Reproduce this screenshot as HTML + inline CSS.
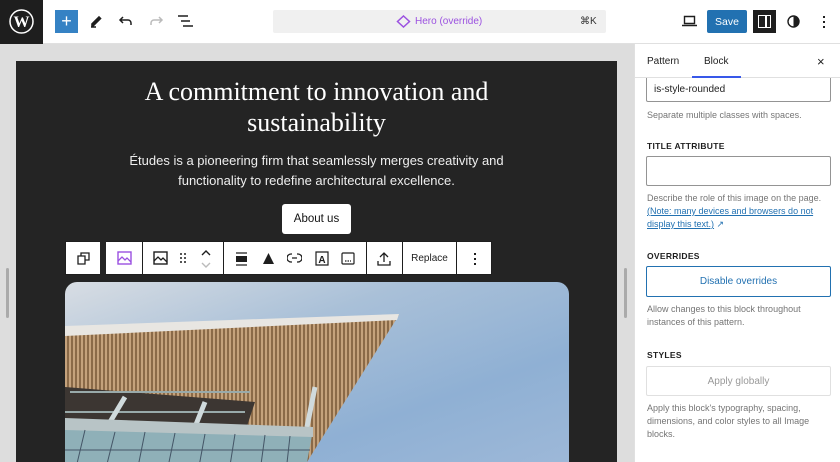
<!DOCTYPE html>
<html><head><meta charset="utf-8"><style>
*{box-sizing:border-box;margin:0;padding:0}
html,body{width:840px;height:462px;overflow:hidden}
body{background:#fff;font-family:"Liberation Sans",sans-serif;position:relative}
.top{position:absolute;left:0;top:0;width:840px;height:44px;background:#fff;border-bottom:1px solid #e0e0e0}
.wp{position:absolute;left:0;top:0;width:43px;height:44px;background:#1e1e1e}
.abs{position:absolute}
.fc{display:flex;align-items:center;justify-content:center}
.canvas{position:absolute;left:0;top:44px;width:634px;height:418px;background:#ddd}
.frame{position:absolute;left:16px;top:61px;width:601px;height:401px;background:#242424}
.side{position:absolute;left:634px;top:44px;width:206px;height:418px;background:#fff;border-left:1px solid #e0e0e0}
.lab{position:absolute;left:12px;font-size:8.5px;font-weight:bold;color:#1e1e1e;letter-spacing:.3px}
.help{position:absolute;left:12px;font-size:9px;color:#757575;line-height:13px;width:190px}
.tb{position:absolute;left:65px;top:241px;width:427px;height:34px;background:#fff;border:1px solid #1e1e1e}
.sep{position:absolute;top:0;width:1px;height:32px;background:#1e1e1e}
</style></head><body>
<div class="top">
 <div class="wp"><svg class="abs" style="left:9px;top:9px" width="25" height="25" viewBox="0 0 25 25"><circle cx="12.5" cy="12.5" r="11.5" fill="none" stroke="#fff" stroke-width="1.5"/><text x="12.5" y="18" font-family="Liberation Serif" font-size="16" font-weight="bold" fill="#fff" text-anchor="middle">W</text></svg></div>
 <div class="abs fc" style="left:55px;top:10px;width:23px;height:23px;background:#3582c4;color:#fff;font-size:18px">+</div>
 <svg class="abs" style="left:88px;top:13px" width="16" height="16" viewBox="0 0 16 16"><path d="M4 11l7-7 1.5 1.5-7 7H4z M3 14h5" stroke="#1e1e1e" stroke-width="1.6" fill="#1e1e1e"/></svg>
 <svg class="abs" style="left:118px;top:14px" width="16" height="14" viewBox="0 0 16 14"><path d="M5 3L2 6l3 3M2 6h8a3 3 0 013 3v2" stroke="#1e1e1e" stroke-width="1.5" fill="none"/></svg>
 <svg class="abs" style="left:148px;top:14px" width="16" height="14" viewBox="0 0 16 14"><path d="M11 3l3 3-3 3M14 6H6a3 3 0 00-3 3v2" stroke="#bbb" stroke-width="1.5" fill="none"/></svg>
 <svg class="abs" style="left:178px;top:15px" width="15" height="12" viewBox="0 0 15 12"><path d="M0 1h10M3 6h9M5 11h10" stroke="#1e1e1e" stroke-width="1.5"/></svg>
 <div class="abs" style="left:273px;top:10px;width:333px;height:23px;background:#f0f0f0;border-radius:2px"></div>
 <svg class="abs" style="left:396px;top:15px" width="15" height="13" viewBox="0 0 15 13"><path d="M7.5 1L13.5 6.5 7.5 12 1.5 6.5z" stroke="#9b51e0" stroke-width="1.5" fill="none"/></svg>
 <div class="abs fc" style="left:415px;top:10px;height:23px;font-size:10px;color:#9b51e0">Hero (override)</div>
 <div class="abs fc" style="left:580px;top:10px;height:23px;font-size:10px;color:#333">⌘K</div>
 <svg class="abs" style="left:682px;top:15px" width="15" height="12" viewBox="0 0 15 12"><path d="M2.5 1.5h10v7h-10z M0 10.5h15" stroke="#1e1e1e" stroke-width="1.4" fill="none"/></svg>
 <div class="abs fc" style="left:707px;top:10px;width:40px;height:23px;background:#2271b1;color:#fff;font-size:10.5px;border-radius:2px">Save</div>
 <div class="abs" style="left:753px;top:10px;width:23px;height:23px;background:#1e1e1e"><div class="abs" style="left:5px;top:5px;width:13px;height:13px;border:1.5px solid #fff"></div><div class="abs" style="left:12px;top:5px;width:1.5px;height:13px;background:#fff"></div></div>
 <svg class="abs" style="left:787px;top:15px" width="13" height="13" viewBox="0 0 13 13"><circle cx="6.5" cy="6.5" r="5.5" stroke="#1e1e1e" stroke-width="1.4" fill="none"/><path d="M6.5 1a5.5 5.5 0 010 11z" fill="#1e1e1e"/></svg>
 <div class="abs" style="left:823px;top:16px;width:2px;height:2px;background:#1e1e1e;box-shadow:0 5px 0 #1e1e1e,0 10px 0 #1e1e1e"></div>
</div>
<div class="canvas"></div>
<div class="abs" style="left:6px;top:268px;width:3px;height:50px;background:#aaa;border-radius:2px"></div>
<div class="abs" style="left:624px;top:268px;width:3px;height:50px;background:#aaa;border-radius:2px"></div>
<div class="frame"></div>
<div class="abs" style="left:16px;top:76px;width:601px;text-align:center;color:#fff;font-family:'Liberation Serif',serif;font-size:26px;line-height:31px">A commitment to innovation and<br>sustainability</div>
<div class="abs" style="left:16px;top:151px;width:601px;text-align:center;color:#eee;font-size:13px;line-height:20px">Études is a pioneering firm that seamlessly merges creativity and<br>functionality to redefine architectural excellence.</div>
<div class="abs fc" style="left:282px;top:204px;width:69px;height:30px;background:#fff;border-radius:3px;font-size:11.5px;color:#111">About us</div>
<div class="abs" style="left:65px;top:282px;width:504px;height:180px;border-radius:12px 12px 0 0;overflow:hidden;background:linear-gradient(160deg,#d8dde3 0%,#a9c0d8 35%,#8fb0d4 70%,#9db8d8 100%)">
 <svg width="504" height="180" viewBox="0 0 504 180">
  <defs><pattern id="s" width="4" height="10" patternUnits="userSpaceOnUse"><rect width="4" height="10" fill="#8a6a48"/><rect width="2" height="10" fill="#c4a27c"/></pattern></defs>
  <polygon points="0,48 334,33 242,180 0,180" fill="url(#s)"/>
  <polygon points="0,44 334,32 332,38 0,54" fill="#e8e6e2"/>
  <polygon points="0,105 190,120 180,150 0,140" fill="#3c3632"/>
  <path d="M5 110h180 M0 130h180" stroke="#9aa" stroke-width="2"/>
  <path d="M60 115l-15 25 M140 120l-10 25 M250 105l-8 40" stroke="#d0dadc" stroke-width="5"/>
  <polygon points="0,138 248,148 242,180 0,180" fill="#8fb0b8"/>
  <polygon points="0,136 248,145 248,155 0,148" fill="#b8c4c6"/>
  <path d="M20 148l-10 42 M50 150l-10 40 M80 150l-8 40 M110 151l-8 39 M140 152l-7 38 M170 152l-6 38 M200 153l-5 37 M225 154l-4 36 M0 168h245" stroke="#456" stroke-width="1"/>
 </svg>
</div>
<div class="tb">
 <div class="sep" style="left:34px;width:6px;background:#242424;top:-1px;height:34px"></div>
 <div class="sep" style="left:76px"></div><div class="sep" style="left:157px"></div><div class="sep" style="left:300px"></div><div class="sep" style="left:336px"></div><div class="sep" style="left:390px"></div>
 <svg class="abs" style="left:11px;top:10px" width="13" height="13" viewBox="0 0 13 13"><path d="M1 4h7v8H1z M4 4V1h8v7H8" stroke="#1e1e1e" stroke-width="1.3" fill="none"/></svg>
 <svg class="abs" style="left:51px;top:9px" width="15" height="14" viewBox="0 0 15 14"><rect x="1" y="1" width="13" height="12" stroke="#9b51e0" stroke-width="1.4" fill="none"/><path d="M1 10l4-4 3 3 2-2 4 4" stroke="#9b51e0" stroke-width="1.3" fill="none"/></svg>
 <svg class="abs" style="left:87px;top:9px" width="15" height="14" viewBox="0 0 15 14"><rect x="1" y="1" width="13" height="12" stroke="#1e1e1e" stroke-width="1.4" fill="none"/><path d="M1 10l4-4 3 3 2-2 4 4" stroke="#1e1e1e" stroke-width="1.3" fill="none"/></svg>
 <div class="abs" style="left:114px;top:11px;width:2px;height:2px;background:#555;box-shadow:4px 0 #555,0 4px #555,4px 4px #555,0 8px #555,4px 8px #555"></div>
 <svg class="abs" style="left:134px;top:7px" width="12" height="20" viewBox="0 0 12 20"><path d="M2 6l4-4 4 4" stroke="#1e1e1e" stroke-width="1.4" fill="none"/><path d="M2 14l4 4 4-4" stroke="#bbb" stroke-width="1.4" fill="none"/></svg>
 <svg class="abs" style="left:169px;top:10px" width="13" height="14" viewBox="0 0 13 14"><path d="M1 1h11 M1 13h11" stroke="#1e1e1e" stroke-width="1.3"/><rect x="1" y="4" width="11" height="6" fill="#1e1e1e"/></svg>
 <svg class="abs" style="left:196px;top:10px" width="13" height="13" viewBox="0 0 13 13"><path d="M6.5 1L12 12H1z" fill="#1e1e1e"/></svg>
 <svg class="abs" style="left:221px;top:11px" width="15" height="10" viewBox="0 0 15 10"><path d="M5 1H4a4 4 0 000 8h1 M10 1h1a4 4 0 010 8h-1 M5 5h5" stroke="#1e1e1e" stroke-width="1.3" fill="none"/></svg>
 <svg class="abs" style="left:249px;top:9px" width="14" height="15" viewBox="0 0 14 15"><path d="M1 1h12v13H1z" stroke="#1e1e1e" stroke-width="1.2" fill="none"/><text x="7" y="12" font-size="10" font-weight="bold" text-anchor="middle" fill="#1e1e1e">A</text></svg>
 <svg class="abs" style="left:275px;top:10px" width="14" height="13" viewBox="0 0 14 13"><rect x="1" y="1" width="12" height="11" rx="1" stroke="#1e1e1e" stroke-width="1.2" fill="none"/><path d="M4 9h6" stroke="#1e1e1e" stroke-width="1.2" stroke-dasharray="1.5 1"/></svg>
 <svg class="abs" style="left:311px;top:9px" width="14" height="15" viewBox="0 0 14 15"><path d="M7 11V2M3 6l4-4 4 4 M1 10v4h12v-4" stroke="#1e1e1e" stroke-width="1.3" fill="none"/></svg>
 <div class="abs fc" style="left:337px;top:0;width:53px;height:32px;font-size:10px;color:#1e1e1e">Replace</div>
 <div class="abs" style="left:408px;top:11px;width:2px;height:2px;background:#1e1e1e;box-shadow:0 5px #1e1e1e,0 10px #1e1e1e"></div>
</div>
<div class="side">
 <div class="abs" style="left:0;top:0;width:206px;height:34px;border-bottom:1px solid #e0e0e0"></div>
 <div class="abs fc" style="left:12px;top:0;height:34px;font-size:10px;color:#1e1e1e">Pattern</div>
 <div class="abs fc" style="left:69px;top:0;height:34px;font-size:10px;color:#1e1e1e">Block</div>
 <div class="abs" style="left:57px;top:32px;width:49px;height:2px;background:#3858e9"></div>
 <div class="abs fc" style="left:182px;top:0;height:34px;font-size:13px;color:#1e1e1e">×</div>
 <div class="abs" style="left:11px;top:34px;width:185px;height:24px;border:1px solid #949494;border-top:none;border-radius:0 0 2px 2px"></div>
 <div class="abs fc" style="left:19px;top:34px;height:22px;font-size:10px;color:#1e1e1e">is-style-rounded</div>
 <div class="help" style="top:65px">Separate multiple classes with spaces.</div>
 <div class="lab" style="top:97px">TITLE ATTRIBUTE</div>
 <div class="abs" style="left:11px;top:112px;width:185px;height:30px;border:1px solid #949494;border-radius:2px"></div>
 <div class="help" style="top:148px">Describe the role of this image on the page. <span style="color:#2271b1;text-decoration:underline">(Note: many devices and browsers do not display this text.)</span> <span style="color:#2271b1">↗</span></div>
 <div class="lab" style="top:207px">OVERRIDES</div>
 <div class="abs fc" style="left:11px;top:222px;width:185px;height:31px;border:1.5px solid #2271b1;border-radius:2px;font-size:10px;color:#2271b1">Disable overrides</div>
 <div class="help" style="top:259px">Allow changes to this block throughout instances of this pattern.</div>
 <div class="lab" style="top:306px">STYLES</div>
 <div class="abs fc" style="left:11px;top:322px;width:185px;height:30px;border:1px solid #e0e0e0;border-radius:2px;font-size:10px;color:#999">Apply globally</div>
 <div class="help" style="top:358px">Apply this block's typography, spacing, dimensions, and color styles to all Image blocks.</div>
</div>
</body></html>
